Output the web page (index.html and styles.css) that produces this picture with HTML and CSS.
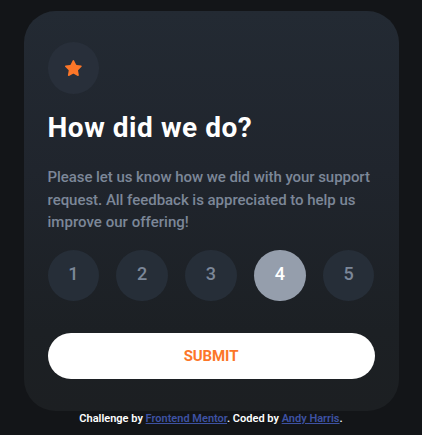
FILE: index.html
```
<!DOCTYPE html>
<html lang="en">
<head>
<meta charset="utf-8">
<title>Interactive rating component</title>
<link rel="stylesheet" href="styles.css">
</head>
<body>
<main class="card">
  <div class="icon">
    <svg width="17" height="16" viewBox="0 0 17 16" aria-hidden="true"><path fill="#FC7628" d="m9.067.43 1.99 4.031c.112.228.33.386.58.422l4.45.647a.772.772 0 0 1 .427 1.316l-3.22 3.138a.773.773 0 0 0-.222.683l.76 4.431a.772.772 0 0 1-1.12.813l-3.98-2.092a.773.773 0 0 0-.718 0l-3.98 2.092a.772.772 0 0 1-1.119-.813l.76-4.431a.77.77 0 0 0-.222-.683L.233 6.846A.772.772 0 0 1 .661 5.53l4.449-.647a.772.772 0 0 0 .58-.422L7.68.43a.774.774 0 0 1 1.387 0Z"/></svg>
  </div>
  <h1 class="title">How did we do?</h1>
  <p class="copy"><span class="line1">Please let us know how we did with your support</span><br><span class="line2">request. All feedback is appreciated to help us</span><br><span class="line3">improve our offering!</span></p>
  <div class="ratings">
    <button class="rating">1</button>
    <button class="rating">2</button>
    <button class="rating">3</button>
    <button class="rating selected">4</button>
    <button class="rating">5</button>
  </div>
  <button class="submit">SUBMIT</button>
</main>
<footer class="attribution">Challenge by <a href="#">Frontend Mentor</a>. Coded by <a href="#">Andy Harris</a>.</footer>
</body>
</html>
```
FILE: styles.css
```
* { box-sizing: border-box; }
body {
  margin: 0;
  height: 435px;
  padding-top: 11px;
  overflow: hidden;
  background: #131518;
  font-family: Roboto, "Liberation Sans", sans-serif;
}
.card {
  width: 375px;
  height: 400px;
  margin: 0 auto;
  padding: 31px 24px 0;
  border-radius: 32px;
  background: linear-gradient(#232a33, #20252d 40%, #1c2024 80%, #1c1f22);
}
.icon {
  display: flex;
  align-items: center;
  justify-content: center;
  width: 51.5px;
  height: 52px;
  border-radius: 50%;
  background: #282f3a;
}
.title {
  margin: 16px 0 0;
  color: #fff;
  font-size: 28px;
  line-height: 36px;
  font-weight: 700;
  letter-spacing: 0.55px;
  white-space: nowrap;
}
.copy {
  margin: 20px 0 0;
  color: #7c8798;
  font-size: 15px;
  line-height: 22.5px;
  font-weight: 500;
  white-space: nowrap;
}
.line1 { letter-spacing: -0.06px; }
.line2 { letter-spacing: -0.03px; }
.line3 { letter-spacing: 0.03px; }
.ratings {
  display: flex;
  justify-content: space-between;
  margin-top: 16px;
}
.rating {
  width: 51.6px;
  height: 51.5px;
  padding: 0 0 2px;
  border: 0;
  border-radius: 50%;
  background: #262e38;
  color: #7c8798;
  font: 500 18px/48px Roboto, sans-serif;
}
.selected { background: #959eac; color: #fff; }
.submit {
  display: block;
  width: 100%;
  height: 46px;
  margin-top: 32px;
  padding: 0;
  border: 0;
  border-radius: 23px;
  background: #fff;
  color: #fc7628;
  font: 700 15px/44px Roboto, sans-serif;
  letter-spacing: -0.1px;
}
.attribution {
  color: #fff;
  font-size: 11px;
  line-height: 16px;
  font-weight: 600;
  text-align: center;
  white-space: nowrap;
}
.attribution a { color: #3e52a3; }
```
